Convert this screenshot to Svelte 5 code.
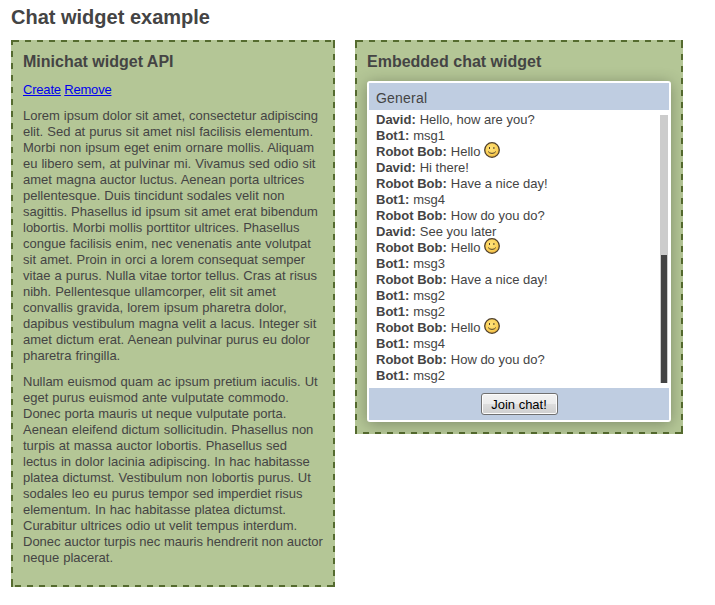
<script>
  const paragraphs = [
    ['Lorem ipsum dolor sit amet, consectetur adipiscing', 'elit. Sed at purus sit amet nisl facilisis elementum.', 'Morbi non ipsum eget enim ornare mollis. Aliquam', 'eu libero sem, at pulvinar mi. Vivamus sed odio sit', 'amet magna auctor luctus. Aenean porta ultrices', 'pellentesque. Duis tincidunt sodales velit non', 'sagittis. Phasellus id ipsum sit amet erat bibendum', 'lobortis. Morbi mollis porttitor ultrices. Phasellus', 'congue facilisis enim, nec venenatis ante volutpat', 'sit amet. Proin in orci a lorem consequat semper', 'vitae a purus. Nulla vitae tortor tellus. Cras at risus', 'nibh. Pellentesque ullamcorper, elit sit amet', 'convallis gravida, lorem ipsum pharetra dolor,', 'dapibus vestibulum magna velit a lacus. Integer sit', 'amet dictum erat. Aenean pulvinar purus eu dolor', 'pharetra fringilla.'],
    ['Nullam euismod quam ac ipsum pretium iaculis. Ut', 'eget purus euismod ante vulputate commodo.', 'Donec porta mauris ut neque vulputate porta.', 'Aenean eleifend dictum sollicitudin. Phasellus non', 'turpis at massa auctor lobortis. Phasellus sed', 'lectus in dolor lacinia adipiscing. In hac habitasse', 'platea dictumst. Vestibulum non lobortis purus. Ut', 'sodales leo eu purus tempor sed imperdiet risus', 'elementum. In hac habitasse platea dictumst.', 'Curabitur ultrices odio ut velit tempus interdum.', 'Donec auctor turpis nec mauris hendrerit non auctor', 'neque placerat.']
  ];
  const messages = [
    ['David', 'Hello, how are you?'], ['Bot1', 'msg1'], ['Robot Bob', 'Hello', true],
    ['David', 'Hi there!'], ['Robot Bob', 'Have a nice day!'], ['Bot1', 'msg4'],
    ['Robot Bob', 'How do you do?'], ['David', 'See you later'], ['Robot Bob', 'Hello', true],
    ['Bot1', 'msg3'], ['Robot Bob', 'Have a nice day!'], ['Bot1', 'msg2'], ['Bot1', 'msg2'],
    ['Robot Bob', 'Hello', true], ['Bot1', 'msg4'], ['Robot Bob', 'How do you do?'], ['Bot1', 'msg2']
  ];
</script>

{#snippet smiley()}
  <svg class="smiley" width="16" height="16" viewBox="0 0 16 16" role="img" aria-label="smile">
    <defs>
      <radialGradient id="face" cx=".45" cy=".4" r=".6">
        <stop offset="0" stop-color="#ffe27a" />
        <stop offset=".7" stop-color="#fbd158" />
        <stop offset="1" stop-color="#e9ae3c" />
      </radialGradient>
    </defs>
    <circle cx="8" cy="8" r="7.3" fill="url(#face)" stroke="#4d3f2c" stroke-width="1.3" />
    <path d="M5.5 5v2M9.9 5v2" stroke="#4d3f2c" stroke-width="1" />
    <path d="M4.2 9.6Q5.4 11.4 8 11.4T11.8 9.6" fill="none" stroke="#4d3f2c" stroke-width="1" />
  </svg>
{/snippet}

<main>
  <h1>Chat widget example</h1>
  <div class="columns">
    <section class="panel">
      <h2>Minichat widget API</h2>
      <div class="copy">
        <p class="links"><a href="#create">Create</a> <a href="#remove">Remove</a></p>
        {#each paragraphs as lines}
          <p>{#each lines as line}<span class="line">{line}</span>{/each}</p>
        {/each}
      </div>
    </section>
    <section class="panel">
      <h2>Embedded chat widget</h2>
      <div class="chat">
        <header>General</header>
        <div class="body">
          <div class="log">
            <div class="messages">
              {#each messages as [name, text, smile]}
                <div class="message"><b>{name}:</b><span>{text}</span>{#if smile}{@render smiley()}{/if}</div>
              {/each}
            </div>
          </div>
          <div class="track"><div class="thumb"></div></div>
        </div>
        <footer><button>Join chat!</button></footer>
      </div>
    </section>
  </div>
</main>

<style>
  :global(body) { margin: 0; background: #fff; }
  main {
    box-sizing: border-box;
    width: 715px;
    height: 605px;
    overflow: hidden;
    padding: 5px 11px 0;
    color: #444;
    font: 13px/16px "Liberation Sans", Arial, sans-serif;
  }
  h1 { margin: 0 0 11px; font-size: 20px; line-height: 24px; }
  h2 { margin: 0 0 9px; font-size: 16px; line-height: 20px; }
  .columns { display: flex; align-items: flex-start; gap: 20px; }
  .panel {
    --c: #556b2f;
    --dash: var(--c) 0 6px, transparent 6px 12px;
    box-sizing: border-box;
    width: 324px;
    padding: 12px;
    background:
      linear-gradient(var(--c), var(--c)) 0 0 / 2px 2px no-repeat,
      linear-gradient(var(--c), var(--c)) 100% 0 / 2px 2px no-repeat,
      linear-gradient(var(--c), var(--c)) 0 100% / 2px 2px no-repeat,
      linear-gradient(var(--c), var(--c)) 100% 100% / 2px 2px no-repeat,
      repeating-linear-gradient(to right, var(--dash)) 2px 0 / 320px 2px no-repeat,
      repeating-linear-gradient(to left, var(--dash)) 2px 100% / 320px 2px no-repeat,
      repeating-linear-gradient(to bottom, var(--dash)) 100% 2px / 2px calc(100% - 4px) no-repeat,
      repeating-linear-gradient(to top, var(--dash)) 0 2px / 2px calc(100% - 4px) no-repeat,
      #b4c696;
  }
  .panel + .panel {
    width: 328px;
    overflow: hidden;
    background-size: 2px 2px, 2px 2px, 2px 2px, 2px 2px, 324px 2px, 324px 2px, 2px calc(100% - 4px), 2px calc(100% - 4px), auto;
  }
  .copy { padding-top: 1px; }
  p { margin: 0 0 10px; word-spacing: .4px; }
  p:last-child { margin-bottom: 9px; }
  .links { word-spacing: 0; letter-spacing: -.2px; }
  a { color: #00e; text-decoration: underline; }
  .line { display: block; white-space: nowrap; }
  p:last-child .line:nth-last-child(2) { word-spacing: 0; }
  .chat {
    box-sizing: border-box;
    width: 304px;
    height: 341px;
    border: 2px solid #fff;
    border-radius: 3px;
    background: #fff;
    box-shadow: 0 2px 15px rgba(0, 0, 0, .3);
    display: flex;
    flex-direction: column;
  }
  header { height: 27px; line-height: 30px; padding-left: 7px; background: #bfcde1; font-size: 14px; letter-spacing: .2px; }
  .body { flex: 1; display: flex; padding: 5px 1px 5px 7px; }
  .log { flex: 1; height: 268px; overflow: hidden; display: flex; flex-direction: column; justify-content: flex-end; }
  .messages { flex: none; margin-bottom: -1px; }
  .message { display: flex; height: 16px; white-space: nowrap; }
  .message span { margin-left: 4px; }
  .smiley { margin: -2px 0 0 4px; }
  .track { box-sizing: border-box; width: 8px; height: 268px; padding: 0 1px; background: #ccc; display: flex; align-items: flex-end; }
  .thumb { width: 6px; height: 128px; background: #444; }
  footer { height: 32px; background: #bfcde1; display: flex; justify-content: center; align-items: center; }
  button {
    box-sizing: border-box;
    width: 77px;
    height: 22px;
    padding: 1px 0 0;
    border: 1px solid #707070;
    border-radius: 3px;
    background: linear-gradient(#f2f2f2, #ebebeb 50%, #ddd 50%, #cfcfcf);
    box-shadow: inset 0 0 0 1px #fcfcfc;
    color: #000;
    font: 13px/18px "Liberation Sans", Arial, sans-serif;
  }
</style>
